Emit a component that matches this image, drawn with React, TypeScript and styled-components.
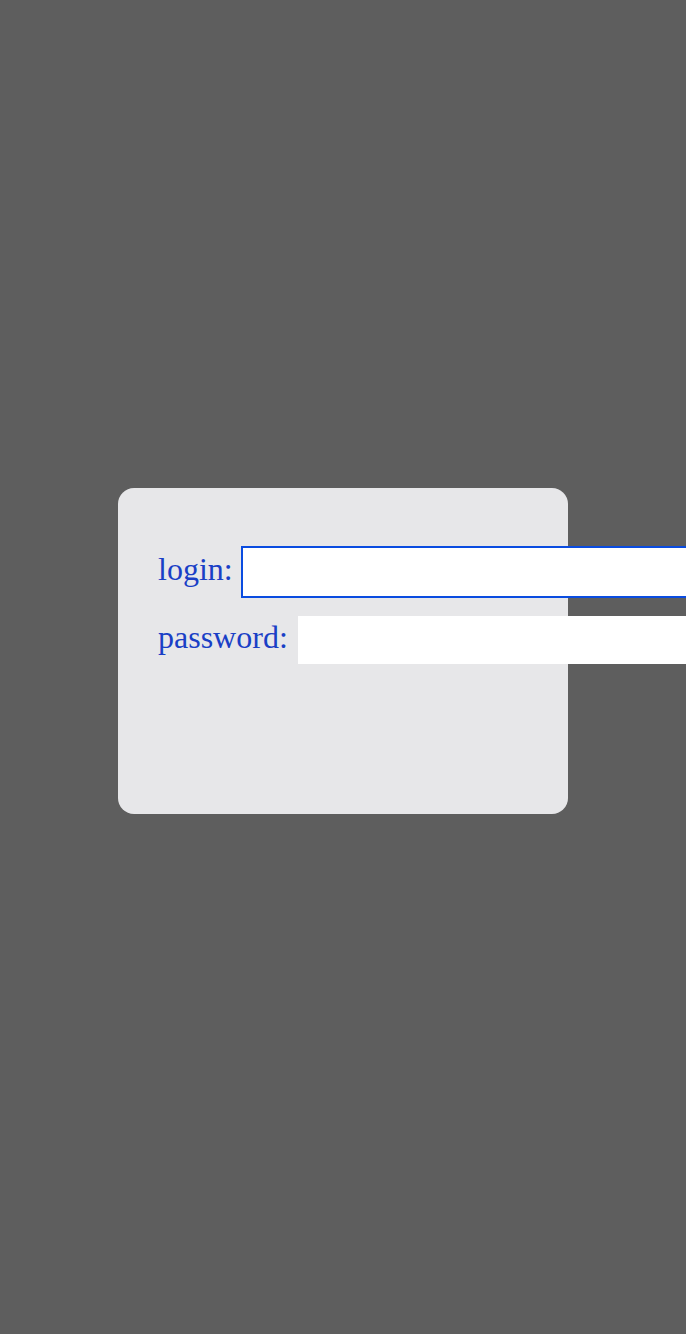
import React from "react";
import styled, { createGlobalStyle } from "styled-components";

const Global = createGlobalStyle`
  html, body { margin: 0; padding: 0; background: #5e5e5e; }
  body { font-family: "Liberation Serif", "Times New Roman", serif; overflow: hidden; }
`;

const Page = styled.div`
  width: 686px;
  height: 1334px;
  overflow: hidden;
  display: flex;
  justify-content: center;
  align-items: flex-start;
  padding-top: 488px;
  box-sizing: border-box;
  background: #5e5e5e;
`;

const Card = styled.form`
  width: 450px;
  height: 326px;
  flex: none;
  box-sizing: border-box;
  padding: 60px 40px 0;
  background: #e7e7e9;
  border-radius: 16px;
  display: flex;
  flex-direction: column;
  gap: 20px;
`;

const Row = styled.label`
  display: flex;
  align-items: center;
  gap: 10px;
  height: 48px;
  white-space: nowrap;
`;

const Label = styled.span`
  font-size: 32px;
  color: #1a3fc6;
  line-height: 42px;
  margin-bottom: 6px;
  flex: none;
`;

const Field = styled.input<{ $focused?: boolean }>`
  flex: none;
  width: 460px;
  height: 48px;
  box-sizing: border-box;
  border: none;
  background: #ffffff;
  padding: 0 8px;
  font-size: 24px;
  font-family: inherit;
  outline: ${(p) => (p.$focused ? "2px solid #0a4ce0" : "none")};
  outline-offset: 0;
`;

export default function App() {
  return (
    <>
      <Global />
      <Page>
        <Card onSubmit={(e) => e.preventDefault()}>
          <Row>
            <Label>login:</Label>
            <Field type="text" $focused />
          </Row>
          <Row>
            <Label>password:</Label>
            <Field type="password" />
          </Row>
        </Card>
      </Page>
    </>
  );
}
